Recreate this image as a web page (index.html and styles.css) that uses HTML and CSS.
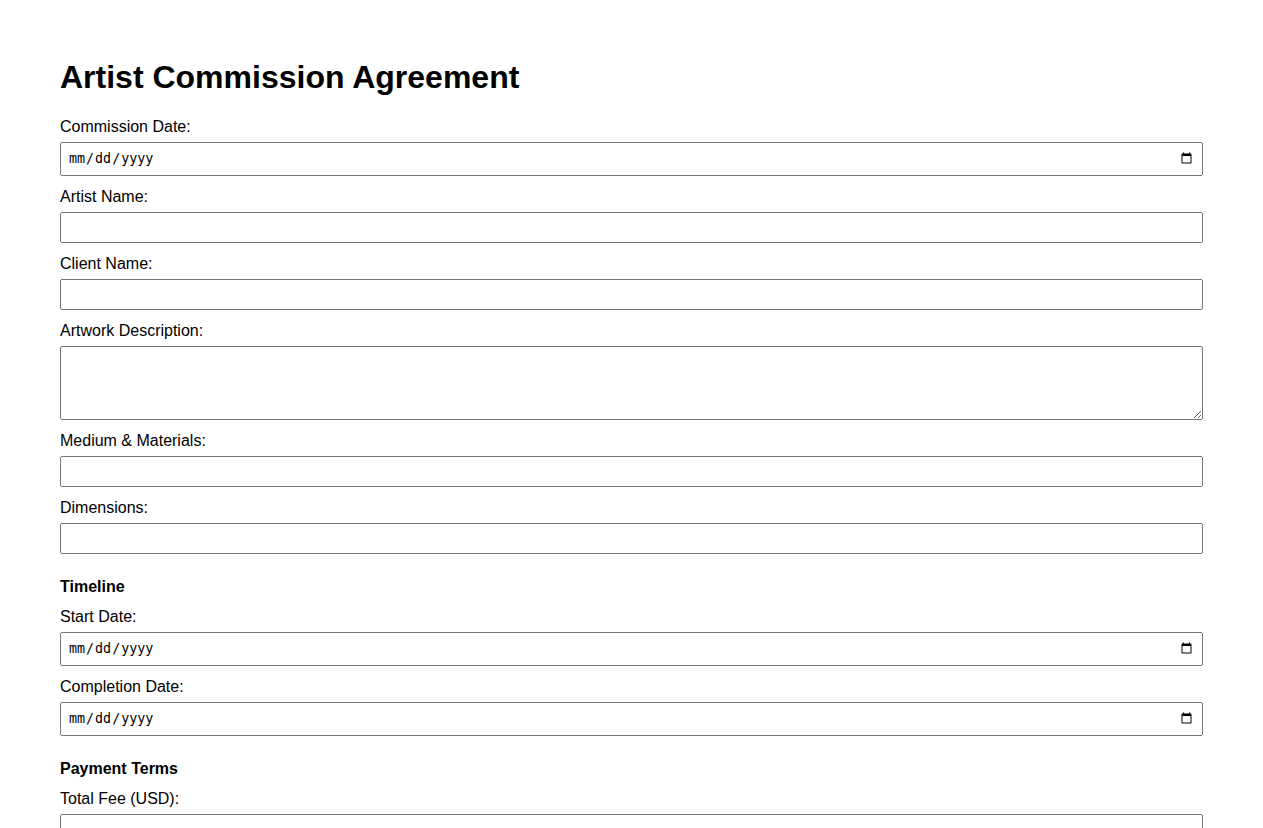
FILE: index.html
```html
<!DOCTYPE html>
<html lang="en">
<head>
<meta charset="utf-8">
<title>Artist Commission Agreement</title>
<link rel="stylesheet" href="styles.css">
</head>
<body>
<main class="page">
  <h1 class="title">Artist Commission Agreement</h1>
  <form class="form">
    <label class="label" for="commission-date">Commission Date:</label>
    <input class="field field-date" type="date" id="commission-date">

    <label class="label" for="artist-name">Artist Name:</label>
    <input class="field" type="text" id="artist-name">

    <label class="label" for="client-name">Client Name:</label>
    <input class="field" type="text" id="client-name">

    <label class="label" for="description">Artwork Description:</label>
    <textarea class="field field-area" id="description"></textarea>

    <label class="label" for="medium">Medium &amp; Materials:</label>
    <input class="field" type="text" id="medium">

    <label class="label" for="dimensions">Dimensions:</label>
    <input class="field" type="text" id="dimensions">

    <h3 class="section-title">Timeline</h3>
    <label class="label" for="start-date">Start Date:</label>
    <input class="field field-date" type="date" id="start-date">

    <label class="label" for="completion-date">Completion Date:</label>
    <input class="field field-date" type="date" id="completion-date">

    <h3 class="section-title">Payment Terms</h3>
    <label class="label" for="total-fee">Total Fee (USD):</label>
    <input class="field" type="number" id="total-fee">

    <label class="label" for="deposit">Deposit (USD):</label>
    <input class="field" type="number" id="deposit">

    <label class="label" for="schedule">Payment Schedule:</label>
    <textarea class="field field-area" id="schedule"></textarea>
  </form>
</main>
</body>
</html>
```

FILE: styles.css
```css
body {
  margin: 0;
  background: #ffffff;
  color: #000000;
  font-family: "Liberation Sans", Arial, sans-serif;
}

.page {
  padding: 38px 60px 40px;
}

.title {
  font-size: 32px;
  font-weight: bold;
  margin: 21.44px 0 21.44px;
}

.form {
  display: block;
}

.label {
  display: block;
  font-size: 16px;
  margin-bottom: 6px;
}

.field {
  display: block;
  width: 100%;
  height: 31px;
  box-sizing: border-box;
  padding: 6px;
  margin: 0 0 12px;
}

.field-date {
  height: 34px;
}

.field-area {
  height: 74px;
}

.section-title {
  font-size: 16px;
  font-weight: bold;
  margin: 24px 0 12px;
}
```
